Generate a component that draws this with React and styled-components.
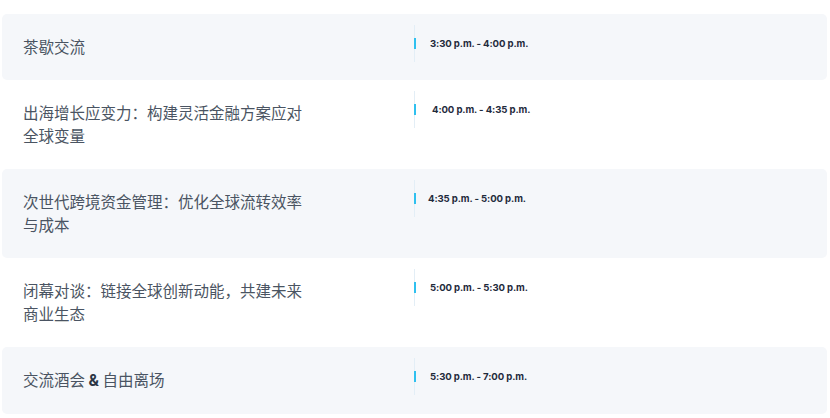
import React from "react";
import styled, { createGlobalStyle } from "styled-components";

const Global = createGlobalStyle`
  html, body { margin: 0; padding: 0; background: #ffffff; }
  body { font-family: "Noto Sans CJK SC", "Noto Sans", sans-serif; }
`;

const Agenda = styled.div`
  padding: 14px 3px 0 2px;
  display: flex;
  flex-direction: column;
`;

const Row = styled.div`
  display: grid;
  grid-template-columns: 391px 1fr;
  align-items: start;
  padding-left: 21px;
  background: ${(p) => (p.$shaded ? "#f5f7fa" : "transparent")};
  border-radius: 5px;
`;

const Title = styled.div`
  padding: 21px 0 22px;
  width: 285px;
  font-family: "Noto Sans CJK SC", "Noto Sans", sans-serif;
  font-size: 15.5px;
  line-height: 23px;
  color: #4a5462;
`;

const Amp = styled.span`
  font-family: Inter, "Liberation Sans", sans-serif;
  font-weight: 700;
  color: #2b3544;
`;

const Time = styled.div`
  position: relative;
  margin-top: 11px;
  height: 37px;
  display: flex;
  align-items: center;
  padding-left: ${(p) => p.$indent}px;
  border-left: 1px solid #e3eef6;
  font-family: Inter, "Liberation Sans", sans-serif;
  font-weight: 700;
  font-size: 9.6px;
  letter-spacing: -0.1px;
  color: #1f2a3c;

  &::before {
    content: "";
    position: absolute;
    left: -1px;
    top: 13px;
    width: 1.5px;
    height: 11px;
    background: #2fc0ef;
  }
`;

const items = [
  { title: "茶歇交流", time: "3:30 p.m. - 4:00 p.m.", indent: 15 },
  { title: "出海增长应变力：构建灵活金融方案应对全球变量", time: "4:00 p.m. - 4:35 p.m.", indent: 17 },
  { title: "次世代跨境资金管理：优化全球流转效率与成本", time: "4:35 p.m. - 5:00 p.m.", indent: 13 },
  { title: "闭幕对谈：链接全球创新动能，共建未来商业生态", time: "5:00 p.m. - 5:30 p.m.", indent: 15 },
  {
    title: (
      <>
        交流酒会 <Amp>&amp;</Amp> 自由离场
      </>
    ),
    time: "5:30 p.m. - 7:00 p.m.",
    indent: 15,
  },
];

export default function App() {
  return (
    <>
      <Global />
      <Agenda>
        {items.map((it, i) => (
          <Row key={i} $shaded={i % 2 === 0}>
            <Title>{it.title}</Title>
            <Time $indent={it.indent}>{it.time}</Time>
          </Row>
        ))}
      </Agenda>
    </>
  );
}
